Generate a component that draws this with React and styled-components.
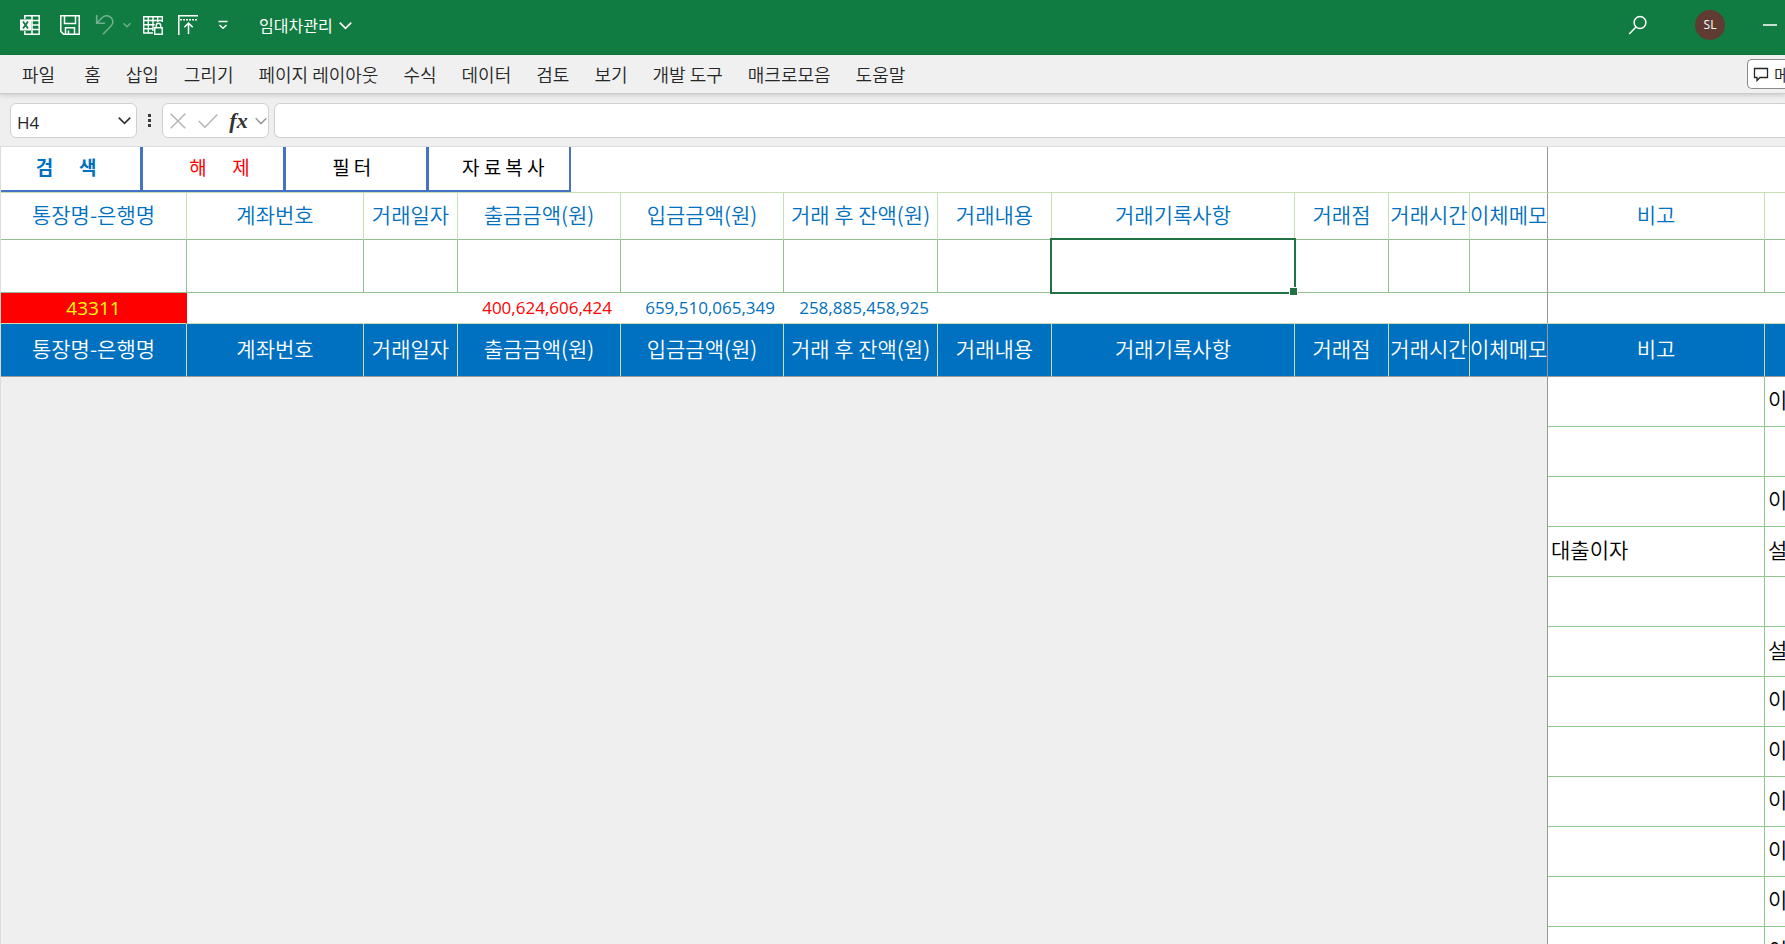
import { useState } from "react";
import styled, { createGlobalStyle } from "styled-components";

const GlobalStyle = createGlobalStyle`
  * {
    box-sizing: border-box;
  }
  body {
    margin: 0;
    overflow: hidden;
    font-family: "Open Sans", "Noto Sans CJK KR", sans-serif;
  }
  button {
    margin: 0;
    padding: 0;
    border: none;
    background: none;
    color: inherit;
    font: inherit;
    cursor: pointer;
  }
`;

const Window = styled.div`
  display: flex;
  flex-direction: column;
  height: 100vh;
  overflow: hidden;
  background: #efefef;
`;

const TitleBar = styled.header`
  display: flex;
  align-items: center;
  justify-content: space-between;
  flex: 0 0 55px;
  padding: 0 0 5px 10px;
  background: #107c41;
  color: #fff;
`;

const BarGroup = styled.div`
  display: flex;
  align-items: center;
`;

const IconButton = styled.button`
  display: flex;
  align-items: center;
  justify-content: center;
  width: ${(p) => p.$width || 40}px;
  height: 40px;
  opacity: ${(p) => (p.$dim ? 0.4 : 1)};
  & svg {
    display: block;
    flex: none;
  }
`;

const FileName = styled.button`
  display: flex;
  align-items: center;
  gap: 6px;
  margin-left: 17px;
  font-family: "Noto Sans CJK KR", sans-serif;
  font-size: 16px;
  line-height: 24px;
`;

const Avatar = styled.button`
  width: 30px;
  height: 30px;
  margin: 0 30px 0 47px;
  border-radius: 50%;
  background: #5f3b32;
  font-size: 12px;
  line-height: 30px;
`;

const MenuBar = styled.nav`
  position: relative;
  display: flex;
  align-items: center;
  flex: 0 0 39px;
  padding-left: 22px;
  border-bottom: 1px solid #cbcbcb;
  background: #f0f0f0;
  box-shadow: 0 1px 5px rgba(0, 0, 0, 0.18);
  color: #262626;
  font-family: "Noto Sans CJK KR", sans-serif;
  font-size: 18px;
  font-weight: 350;
`;

const MenuList = styled.div`
  display: flex;
  gap: 25px;
  flex: 1;
  & > button {
    line-height: 28px;
    white-space: nowrap;
  }
  & > button:first-child {
    margin-right: 4px;
  }
`;

const CommentButton = styled.button`
  display: flex;
  align-items: center;
  gap: 5px;
  flex: 0 0 38px;
  height: 30px;
  padding-left: 5px;
  overflow: hidden;
  border: 1px solid #8a8a8a;
  border-right: none;
  border-radius: 5px 0 0 5px;
  background: #fff;
  white-space: nowrap;
  font-size: 17px;
  & svg {
    flex: none;
  }
`;

const FormulaBar = styled.div`
  display: flex;
  flex: 0 0 52px;
  align-items: flex-start;
  padding: 9px 0 0 10px;
`;

const Field = styled.div`
  display: flex;
  align-items: center;
  height: 35px;
  border: 1px solid #d0d0d0;
  border-radius: 6px;
  background: #fff;
`;

const NameBox = styled(Field)`
  width: 127px;
  padding: 0 5px 0 6px;
  & input {
    flex: 1;
    min-width: 0;
    padding: 3px 0 0;
    border: none;
    outline: none;
    background: none;
    color: #262626;
    font: 17px "Open Sans", sans-serif;
  }
`;

const Dots = styled.div`
  display: flex;
  flex-direction: column;
  align-items: center;
  justify-content: center;
  gap: 2px;
  width: 25px;
  height: 35px;
  & > i {
    width: 3px;
    height: 3px;
    background: #3b3b3b;
  }
`;

const FxBox = styled(Field)`
  width: 107px;
  margin-right: 5px;
`;

const FxLabel = styled.span`
  color: #333;
  font: italic bold 22px "Liberation Serif", serif;
`;

const FormulaInput = styled.input`
  flex: 1;
  height: 35px;
  padding: 0 8px;
  border: 1px solid #d0d0d0;
  border-right: none;
  border-radius: 6px 0 0 6px;
  outline: none;
  background: #fff;
  font-size: 17px;
`;

const Sheet = styled.main`
  flex: 1;
  min-height: 0;
  overflow: hidden;
  border-top: 1px solid #dcdcdc;
  border-left: 1px solid #dcdcdc;
`;

const Grid = styled.table`
  width: 100%;
  table-layout: fixed;
  border-spacing: 0;
  background: #fff;
  font-family: "Noto Sans CJK KR", sans-serif;
  font-size: 21px;
  font-weight: 350;
  line-height: 30px;
`;

const Row = styled.tr`
  height: ${(p) => p.$height}px;
`;

const Cell = styled.td`
  padding: 0;
  border-right: ${(p) => (p.$last ? 0 : 1)}px solid
    ${(p) => (p.$frozen ? "#999" : p.$line || "transparent")};
  border-bottom: 1px solid ${(p) => p.$bottom || "#c6e0b4"};
  overflow: hidden;
  white-space: nowrap;
`;

const HeadCell = styled(Cell).attrs({ as: "th" })`
  padding-bottom: 5px;
  background: ${(p) => (p.$filled ? "#0070c0" : "#fff")};
  color: ${(p) => (p.$filled ? "#fff" : "#0070c0")};
  font-weight: 350;
  text-align: center;
`;

const CountCell = styled(Cell)`
  background: #f00;
  color: #ff0;
  font-family: "Open Sans", sans-serif;
  font-size: 19px;
  font-weight: 400;
  line-height: 28px;
  text-align: center;
`;

const SumCell = styled(Cell)`
  padding-right: 8px;
  color: ${(p) => p.$color || "#0070c0"};
  font-family: "Open Sans", sans-serif;
  font-size: 17px;
  font-weight: 400;
  line-height: 28px;
  text-align: right;
`;

const SelectedCell = styled(Cell)`
  position: relative;
  overflow: visible;
  &::before {
    content: "";
    position: absolute;
    z-index: 1;
    inset: -2px;
    border: 2px solid #217346;
  }
  &::after {
    content: "";
    position: absolute;
    z-index: 2;
    right: -4px;
    bottom: -4px;
    width: 7px;
    height: 7px;
    border: 1px solid #fff;
    background: #217346;
  }
`;

const HiddenArea = styled(Cell)`
  background: #efefef;
`;

const TextCell = styled(Cell)`
  padding: 0 0 5px 3px;
  color: #000;
`;

const Actions = styled.div`
  display: flex;
  height: 45px;
`;

const ActionButton = styled.button`
  width: ${(p) => (p.$edge ? 142 : 143)}px;
  padding-bottom: 3px;
  border-right: ${(p) => (p.$last ? 2 : 3)}px solid #4472c4;
  border-bottom: 2px solid #4472c4;
  color: ${(p) => p.$color || "#000"};
  font-size: 19px;
  font-weight: ${(p) => (p.$bold ? 700 : 400)};
  white-space: pre;
`;

const LIGHT = "#c6e0b4";
const GREEN = "#92c08e";
const BODY = "#93c78f";

const COLUMNS = [
  { name: "통장명-은행명", width: 186 },
  { name: "계좌번호", width: 177 },
  { name: "거래일자", width: 94 },
  { name: "출금금액(원)", width: 163 },
  { name: "입금금액(원)", width: 163 },
  { name: "거래 후 잔액(원)", width: 154 },
  { name: "거래내용", width: 114 },
  { name: "거래기록사항", width: 243 },
  { name: "거래점", width: 94 },
  { name: "거래시간", width: 81 },
  { name: "이체메모", width: 78, frozen: true },
  { name: "비고", width: 217 },
  { name: "" },
];

const MENUS = [
  "파일",
  "홈",
  "삽입",
  "그리기",
  "페이지 레이아웃",
  "수식",
  "데이터",
  "검토",
  "보기",
  "개발 도구",
  "매크로모음",
  "도움말",
];

const ROWS = [
  ["", "이"],
  ["", ""],
  ["", "이"],
  ["대출이자", "설"],
  ["", ""],
  ["", "설"],
  ["", "이"],
  ["", "이"],
  ["", "이"],
  ["", "이"],
  ["", "이"],
  ["", "이"],
];

function Chevron({ size = 12, color = "currentColor", stroke = 1.5 }) {
  return (
    <svg width={size} height={size} viewBox="0 0 12 12" fill="none">
      <path d="M0.7 3.3 6 8.6l5.3-5.3" stroke={color} strokeWidth={stroke} />
    </svg>
  );
}

function ExcelIcon() {
  return (
    <svg width="20" height="20" viewBox="0 0 20 20" fill="none">
      <path
        d="M4.8 4V.8h14.4v18.4H4.8V16M12 1v18M12 5.5h7M12 10h7M12 14.5h7M5 5.5h7"
        stroke="#fff"
        strokeWidth="1.5"
      />
      <path d="M0 4.5h11v11H0z" fill="#fff" />
      <path d="m3 6.5 5 7M8 6.5l-5 7" stroke="#107c41" strokeWidth="1.8" />
    </svg>
  );
}

function SaveIcon() {
  return (
    <svg width="20" height="20" viewBox="0 0 20 20" fill="none" stroke="#fff" strokeWidth="1.5">
      <path d="M.8.8h18.4v18.4H3.6L.8 16.4zM4.5 1v7.5h11V1M5.500 19v-6.300h9V19M8.500 19v-3.500" />
    </svg>
  );
}

function UndoIcon() {
  return (
    <svg width="20" height="20" viewBox="0 0 20 20" fill="none" stroke="#fff" strokeWidth="1.6">
      <path d="M1.7 0v8.3H10M2 8l5-5.2c2.7-2.7 6.500-2.700 9-.3 2.500 2.500 2.500 6 0 8.500L8 19.300" />
    </svg>
  );
}

function TableLockIcon() {
  return (
    <svg width="20" height="20" viewBox="0 0 20 20" fill="none" stroke="#fff" strokeWidth="1.4">
      <path d="M10 18H.7V1.700h18.600V7M.7 5.500h18.600M.7 9.700h11M.7 13.800h9M5.300 1.700V18M10 1.700V16M14.700 1.700V7" />
      <path d="M11.700 12.700h7.500v6.500h-7.500zM13.200 12.700v-2.200c0-3 4.500-3 4.500 0v2.200" />
    </svg>
  );
}

function FreezeIcon() {
  return (
    <svg width="20" height="20" viewBox="0 0 20 20" fill="none" stroke="#fff" strokeWidth="1.500">
      <path d="M0 .8h20M.8.8V20M10.500 19V8.500M6.300 12.300l4.200-4.200 4.200 4.200" />
      <path d="M2 4.700h18" strokeDasharray="2 1" />
    </svg>
  );
}

function MoreIcon() {
  return (
    <svg width="10" height="10" viewBox="0 0 10 10" fill="none" stroke="#fff" strokeWidth="1.500">
      <path d="M.500 1.500h9M1.500 5 5 8.300 8.500 5" />
    </svg>
  );
}

function SearchIcon() {
  return (
    <svg width="20" height="20" viewBox="0 0 20 20" fill="none" stroke="#fff" strokeWidth="1.500">
      <circle cx="12" cy="7.500" r="5.900" />
      <path d="M8 12 1.200 19" />
    </svg>
  );
}

function CommentIcon() {
  return (
    <svg width="16" height="16" viewBox="0 0 16 16" fill="none" stroke="#262626" strokeWidth="1.300">
      <path d="M1.500 2.500h13v9H7l-3 3v-3H1.500z" />
    </svg>
  );
}

function Toolbar() {
  return (
    <TitleBar>
      <BarGroup>
        <IconButton aria-label="Excel">
          <ExcelIcon />
        </IconButton>
        <IconButton aria-label="저장">
          <SaveIcon />
        </IconButton>
        <IconButton aria-label="실행 취소" $width={30} $dim>
          <UndoIcon />
        </IconButton>
        <IconButton aria-label="실행 취소 목록" $width={14} $dim>
          <Chevron size={8} stroke={2} />
        </IconButton>
        <IconButton aria-label="시트 보호" $width={38}>
          <TableLockIcon />
        </IconButton>
        <IconButton aria-label="틀 고정" $width={32}>
          <FreezeIcon />
        </IconButton>
        <IconButton aria-label="사용자 지정" $width={38}>
          <MoreIcon />
        </IconButton>
        <FileName>
          임대차관리
          <Chevron size={13} />
        </FileName>
      </BarGroup>
      <BarGroup>
        <IconButton aria-label="검색" $width={20}>
          <SearchIcon />
        </IconButton>
        <Avatar>SL</Avatar>
        <IconButton aria-label="최소화" $width={30}>
          <svg width="14" height="2">
            <path d="M0 1h14" stroke="#fff" strokeWidth="1.500" />
          </svg>
        </IconButton>
      </BarGroup>
    </TitleBar>
  );
}

function Formula() {
  const [name, setName] = useState("H4");
  const [formula, setFormula] = useState("");

  return (
    <FormulaBar>
      <NameBox>
        <input aria-label="이름 상자" value={name} onChange={(e) => setName(e.target.value)} />
        <IconButton aria-label="이름 목록" $width={13}>
          <Chevron size={13} color="#333" />
        </IconButton>
      </NameBox>
      <Dots>
        <i />
        <i />
        <i />
      </Dots>
      <FxBox>
        <IconButton aria-label="취소" $width={30}>
          <svg width="16" height="16" fill="none" stroke="#b5b5b5" strokeWidth="1.500">
            <path d="M.700.700l14.600 14.600M15.300.700.700 15.300" />
          </svg>
        </IconButton>
        <IconButton aria-label="입력" $width={30}>
          <svg width="20" height="16" fill="none" stroke="#b5b5b5" strokeWidth="1.500">
            <path d="m.700 8 6.300 6.300L19.300 1.500" />
          </svg>
        </IconButton>
        <IconButton aria-label="함수 삽입" $width={31}>
          <FxLabel>fx</FxLabel>
        </IconButton>
        <IconButton aria-label="함수 목록" $width={13}>
          <Chevron size={12} color="#999" />
        </IconButton>
      </FxBox>
      <FormulaInput aria-label="수식" value={formula} onChange={(e) => setFormula(e.target.value)} />
    </FormulaBar>
  );
}

function HeadRow({ height, filled, bottom }) {
  return (
    <Row $height={height}>
      {COLUMNS.map((c, i) => (
        <HeadCell
          key={i}
          $filled={filled}
          $frozen={c.frozen}
          $line={LIGHT}
          $bottom={bottom}
          $last={i === COLUMNS.length - 1}
        >
          {c.name}
        </HeadCell>
      ))}
    </Row>
  );
}

export default function App() {
  return (
    <Window>
      <GlobalStyle />
      <Toolbar />
      <MenuBar>
        <MenuList>
          {MENUS.map((m) => (
            <button key={m}>{m}</button>
          ))}
        </MenuList>
        <CommentButton>
          <CommentIcon />메
        </CommentButton>
      </MenuBar>
      <Formula />
      <Sheet>
        <Grid>
          <colgroup>
            {COLUMNS.map((c, i) => (
              <col key={i} width={c.width} />
            ))}
          </colgroup>
          <tbody>
            <Row $height={46}>
              <Cell colSpan={11} $frozen>
                <Actions>
                  <ActionButton $edge $bold $color="#0070c0">
                    {"검      색  "}
                  </ActionButton>
                  <ActionButton $color="#f00">{"   해      제"}</ActionButton>
                  <ActionButton>{"필 터  "}</ActionButton>
                  <ActionButton $edge $last>
                    {"  자 료 복 사"}
                  </ActionButton>
                </Actions>
              </Cell>
              <Cell colSpan={2} $last />
            </Row>
            <HeadRow height={47} bottom={GREEN} />
            <Row $height={53}>
              {COLUMNS.map((c, i) => {
                const Box = i === 7 ? SelectedCell : Cell;
                return (
                  <Box
                    key={i}
                    $frozen={c.frozen}
                    $line={GREEN}
                    $bottom={GREEN}
                    $last={i === COLUMNS.length - 1}
                  />
                );
              })}
            </Row>
            <Row $height={31}>
              <CountCell>43311</CountCell>
              <Cell />
              <Cell />
              <SumCell $color="#f00">400,624,606,424</SumCell>
              <SumCell>659,510,065,349</SumCell>
              <SumCell>258,885,458,925</SumCell>
              <Cell colSpan={5} $frozen />
              <Cell colSpan={2} $last />
            </Row>
            <HeadRow height={53} filled bottom="#999" />
            {ROWS.map(([note, extra], i) => (
              <Row key={i} $height={50}>
                {i === 0 && <HiddenArea colSpan={11} rowSpan={ROWS.length} $frozen />}
                <TextCell $line={BODY} $bottom={BODY}>
                  {note}
                </TextCell>
                <TextCell $bottom={BODY} $last>
                  {extra}
                </TextCell>
              </Row>
            ))}
          </tbody>
        </Grid>
      </Sheet>
    </Window>
  );
}
